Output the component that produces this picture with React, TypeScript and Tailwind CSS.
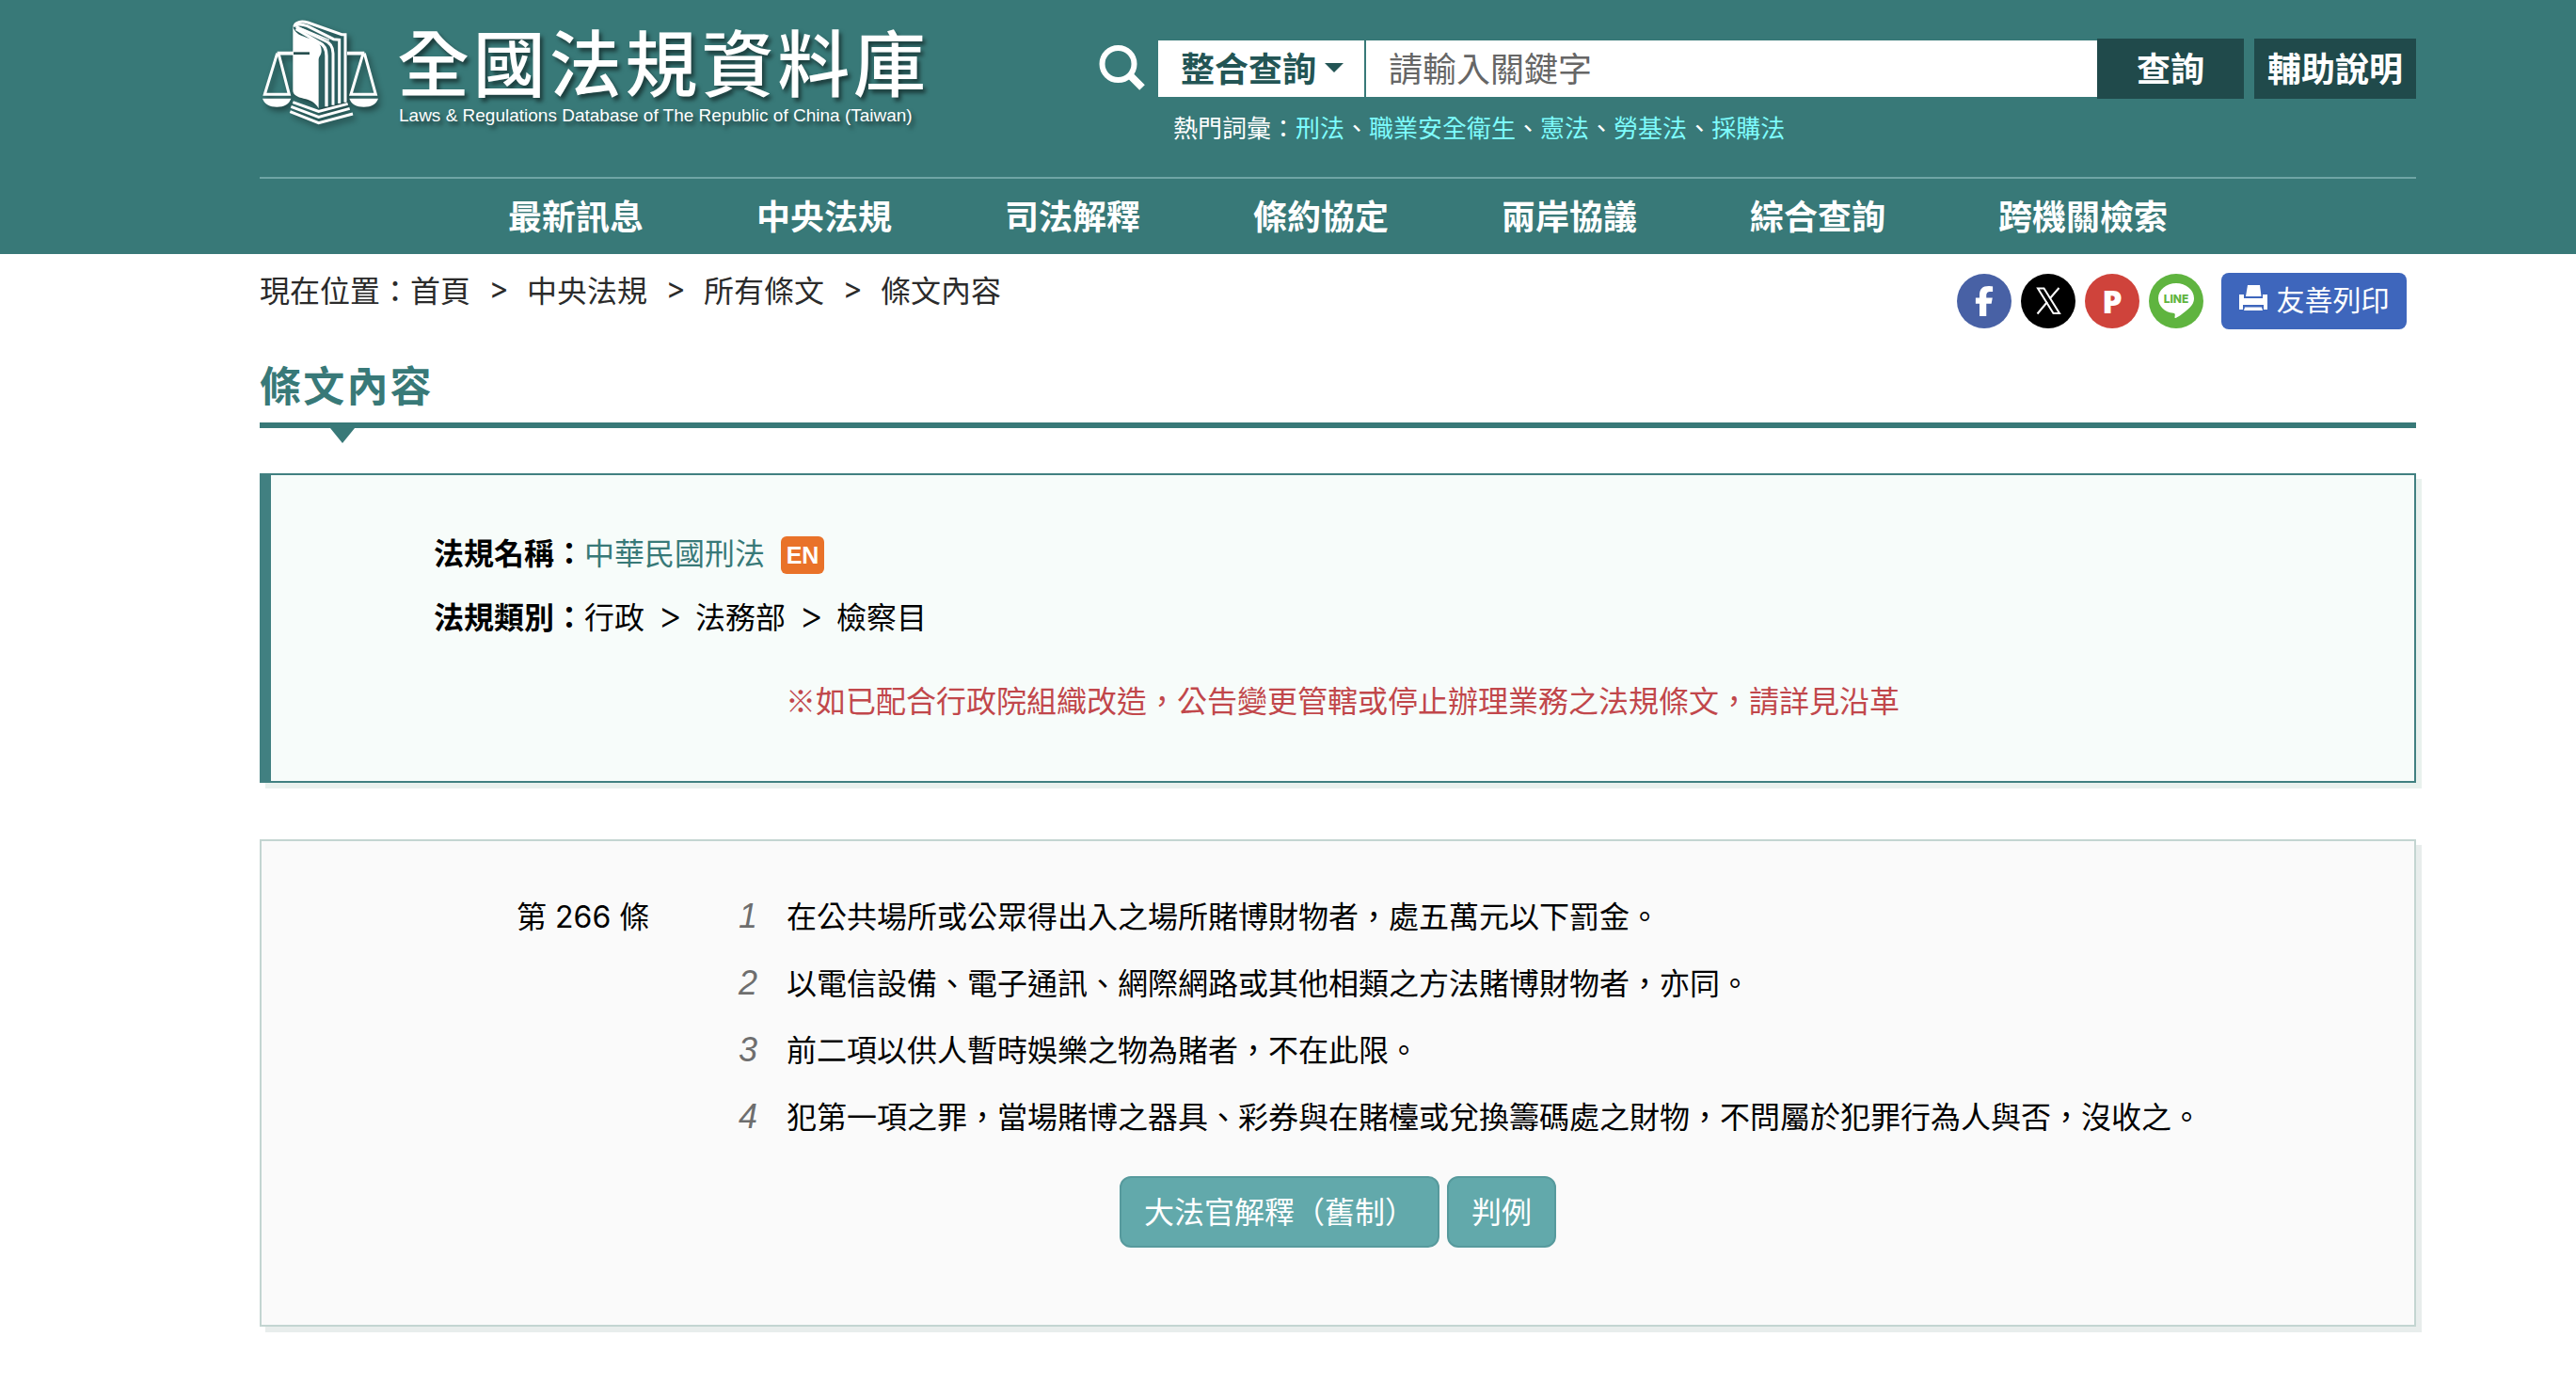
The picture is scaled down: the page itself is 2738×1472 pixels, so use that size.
import React from "react";
import { FaFacebookF } from "react-icons/fa6";

const navItems = ["最新訊息", "中央法規", "司法解釋", "條約協定", "兩岸協議", "綜合查詢", "跨機關檢索"];
const hotWords = ["刑法", "職業安全衛生", "憲法", "勞基法", "採購法"];
const crumbs = ["首頁", "中央法規", "所有條文"];
const paragraphs = [
  "在公共場所或公眾得出入之場所賭博財物者，處五萬元以下罰金。",
  "以電信設備、電子通訊、網際網路或其他相類之方法賭博財物者，亦同。",
  "前二項以供人暫時娛樂之物為賭者，不在此限。",
  "犯第一項之罪，當場賭博之器具、彩券與在賭檯或兌換籌碼處之財物，不問屬於犯罪行為人與否，沒收之。",
];

function ScalesLogo() {
  return (
    <svg viewBox="18 21 390 366" className="h-[122px] w-[130px] shrink-0 overflow-visible drop-shadow-[3px_4px_3px_rgba(0,0,0,0.45)]" aria-hidden="true">
      <g fill="none" stroke="#fff" strokeWidth="9">
        <path d="M128 140H74M290 140H352" strokeWidth="11" />
        <path d="M74 140L34 271H112L78 140" />
        <path d="M348 140L309 271H388L352 140" />
      </g>
      <path d="M27 284H118C112 302 96 311 73 311S33 302 27 284Z" fill="#fff" />
      <path d="M304 284H396C390 302 374 311 350 311S310 302 304 284Z" fill="#fff" />
      <path d="M124 60V52C126 38 148 30 172 38L284 76H297V293L205 316V130Z" fill="#2b5f60" />
      <g fill="none" stroke="#fff" strokeWidth="9">
        <path d="M128 56C130 40 150 36 172 42L280 80H291V296" />
        <path d="M132 54C140 44 156 48 170 53L254 95L272 97V300" />
        <path d="M134 56L222 98C244 106 252 120 252 140V305" />
        <path d="M134 62L208 106C226 114 231 128 231 148V310" strokeWidth="10" />
        <path d="M140 56L240 98" strokeWidth="4" />
      </g>
      <path d="M124 54C130 78 150 84 178 93C204 101 215 112 215 132C215 146 207 148 206 160V316C196 296 178 288 158 284C138 280 124 272 124 258Z" fill="#fff" />
      <path d="M126 140H177" stroke="#274f4f" strokeWidth="8" />
      <g fill="none" stroke="#fff" strokeWidth="9">
        <path d="M124 296L206 325L299 301" />
        <path d="M118 310L206 343L305 316" />
        <path d="M115 326L206 362L315 333" />
      </g>
    </svg>
  );
}

function XIcon() {
  return (
    <svg viewBox="0 0 58 58" className="size-[58px]" aria-hidden="true">
      <g fill="none" stroke="#fff" strokeWidth="2">
        <path d="M18 15.5H24.500L41 42H34.500Z" />
        <path d="M40.500 15L31 26M28 30L17.500 42.500" />
      </g>
    </svg>
  );
}

function LineIcon() {
  return (
    <svg viewBox="0 0 58 58" className="size-[58px]" aria-hidden="true">
      <path d="M29 10C39.500 10 48 17 48 26C48 31.500 45 35 40 39C36 42.500 31 46 28.500 47C27 47.500 27.500 46 27.700 44.500C28 42.500 27.500 42 26 41.800C17 41 10 34.500 10 26C10 17 18.500 10 29 10Z" fill="#fff" />
      <text x="29" y="31" textAnchor="middle" fill="#5fb43f" fontFamily="Inter" fontWeight="800" fontSize="12">LINE</text>
    </svg>
  );
}

function PrinterIcon() {
  return (
    <svg viewBox="0 0 30 28" className="h-[28px] w-[30px]" aria-hidden="true">
      <path d="M9 0H22L23.500 12H7Z" fill="#fff" />
      <path d="M0 10H5V14H25V10H30V26H26V21H4V26H0Z" fill="#fff" />
      <path d="M6 23.500H24L25 27H5Z" fill="#fff" />
    </svg>
  );
}

function Gt({ className }: { className: string }) {
  return <span className={"text-center font-['Inter',sans-serif] " + className}>&gt;</span>;
}

export default function App() {
  return (
    <div lang="zh-Hant" className="min-h-screen bg-white font-['Noto_Sans_CJK_TC',sans-serif] text-[32px] text-black">
      <header className="bg-[#387978] pr-[170px] pl-[276px] text-white">
        <div className="flex h-[188px] items-start">
          <a href="#" className="flex w-[892px] shrink-0 gap-[16px] pt-[17px]">
            <ScalesLogo />
            <span className="flex flex-col whitespace-nowrap [text-shadow:3px_4px_4px_rgba(0,0,0,0.5)]">
              <span className="text-[77px] leading-[94px] font-medium tracking-wider">全國法規資料庫</span>
              <span className="pl-[2px] font-['Liberation_Sans',sans-serif] text-[19px] leading-[24px]">
                Laws &amp; Regulations Database of The Republic of China (Taiwan)
              </span>
            </span>
          </a>
          <div className="min-w-0 flex-1 pt-[41px]">
            <form className="flex items-center" onSubmit={(e) => e.preventDefault()}>
              <svg viewBox="0 0 50 50" className="mr-[13px] size-[50px] shrink-0" aria-hidden="true">
                <circle cx="20.500" cy="20" r="17" fill="none" stroke="#fff" strokeWidth="6" />
                <path d="M32 31L46 45" stroke="#fff" strokeWidth="8" />
              </svg>
              <div className="relative mr-[2px] h-[60px] w-[219px] shrink-0 bg-white">
                <select aria-label="查詢類別" className="size-full appearance-none bg-transparent pb-[4px] pl-[24px] text-[36px] font-bold text-[#235555]">
                  <option>整合查詢</option>
                </select>
                <svg viewBox="0 0 20 10" className="pointer-events-none absolute top-[24px] right-[22px] h-[10px] w-[20px]" aria-hidden="true">
                  <path d="M0 0H20L10 10Z" fill="#235555" />
                </svg>
              </div>
              <input
                type="text"
                aria-label="關鍵字"
                placeholder="請輸入關鍵字"
                className="h-[60px] min-w-0 flex-1 bg-white px-[24px] pb-[4px] text-[36px] text-black outline-none placeholder:text-[#666]"
              />
              <button type="submit" className="h-[64px] w-[156px] shrink-0 bg-[#204a4b] pb-[4px] text-[36px] leading-[60px] font-bold">查詢</button>
              <button type="button" className="ml-[11px] h-[64px] w-[172px] shrink-0 bg-[#204a4b] pb-[4px] text-[36px] leading-[60px] font-bold">輔助說明</button>
            </form>
            <p className="mt-[10px] pl-[79px] text-[26px] leading-[40px]">
              熱門詞彙：
              {hotWords.map((w, i) => (
                <React.Fragment key={w}>
                  {i > 0 && "、"}
                  <a href="#" className="text-[#7efcfd]">{w}</a>
                </React.Fragment>
              ))}
            </p>
          </div>
        </div>
        <nav className="flex h-[82px] items-center justify-center gap-[120px] border-t-2 border-[#6fa5a5] pb-[4px] text-[36px] font-bold">
          {navItems.map((n) => (
            <a key={n} href="#">{n}</a>
          ))}
        </nav>
      </header>

      <main className="pr-[170px] pl-[276px]">
        <div className="flex items-start justify-between pt-[17px] pr-[10px]">
          <nav aria-label="現在位置" className="flex leading-[40px] text-[#2b2b2b]">
            <span>現在位置：</span>
            {crumbs.map((c) => (
              <React.Fragment key={c}>
                <a href="#">{c}</a>
                <Gt className="w-[60px]" />
              </React.Fragment>
            ))}
            <span>條文內容</span>
          </nav>
          <div className="flex items-center pt-[3px]">
            <div className="flex gap-[10px]">
              <a href="#" aria-label="Facebook" className="flex size-[58px] items-center justify-center rounded-full bg-[#4861a5] text-white">
                <FaFacebookF className="size-[32px]" />
              </a>
              <a href="#" aria-label="X" className="size-[58px] rounded-full bg-black"><XIcon /></a>
              <a href="#" aria-label="Plurk" className="size-[58px] rounded-full bg-[#cf433b] text-center font-['Open_Sans',sans-serif] text-[34px] leading-[58px] font-extrabold text-white">P</a>
              <a href="#" aria-label="LINE" className="size-[58px] rounded-full bg-[#5fb43f]"><LineIcon /></a>
            </div>
            <button type="button" className="ml-[19px] flex h-[60px] w-[197px] items-center justify-center gap-[10px] rounded-lg bg-[#3e66bc] pb-[6px] text-[30px] text-white">
              <PrinterIcon />
              友善列印
            </button>
          </div>
        </div>

        <h1 className="relative mt-[28px] border-b-6 border-[#387978] pb-[11px] text-[44px] leading-[60px] font-bold tracking-wider text-[#387978]">
          條文內容
          <svg viewBox="0 0 26 16" className="absolute top-[77px] left-[75px] h-[16px] w-[26px]" aria-hidden="true">
            <path d="M0 0H26L13 16Z" fill="#387978" />
          </svg>
        </h1>

        <section className="mt-[48px] border-2 border-l-12 border-[#418081] bg-[#f7fcfa] pt-[47px] pb-[53px] leading-[68px] shadow-[6px_6px_0_#e9f1ee]">
          <dl className="pl-[173px]">
            <div className="flex">
              <dt className="font-bold">法規名稱：</dt>
              <dd className="flex items-center">
                <a href="#" className="text-[#387978]">中華民國刑法</a>
                <a href="#" className="mt-[8px] ml-[17px] flex h-[40px] w-[46px] items-center justify-center rounded-md bg-[#e97229] font-['Liberation_Sans',sans-serif] text-[25px] font-bold text-white">EN</a>
              </dd>
            </div>
            <div className="flex">
              <dt className="font-bold">法規類別：</dt>
              <dd className="flex">
                行政<Gt className="w-[54px] text-[40px] font-light" />法務部<Gt className="w-[54px] text-[40px] font-light" />檢察目
              </dd>
            </div>
          </dl>
          <p className="mt-[21px] text-center text-[#c1474b]">※如已配合行政院組織改造，公告變更管轄或停止辦理業務之法規條文，請詳見沿革</p>
        </section>

        <section className="mt-[60px] border-2 border-[#c3d5d1] bg-[#fafafa] pt-[43px] pb-[82px] leading-[71px] shadow-[6px_6px_0_#e8edec]">
          <div className="flex pl-[271px]">
            <h2 className="w-[188px] shrink-0 whitespace-nowrap">
              第<span className="font-['Inter',sans-serif]"> 266 </span>條
            </h2>
            <ol>
              {paragraphs.map((p, i) => (
                <li key={p} className="flex items-baseline">
                  <span className="w-[68px] shrink-0 text-right font-['Liberation_Sans',sans-serif] text-[36px] leading-[36px] text-[#6e6e6e] italic">{i + 1}</span>
                  <span className="pl-[31px]">{p}</span>
                </li>
              ))}
            </ol>
          </div>
          <div className="mt-[29px] flex justify-center gap-[8px]">
            <button type="button" className="h-[76px] rounded-xl border-2 border-[#579a9d] bg-[#62a9ab] px-[24px] pb-[4px] leading-[68px] text-white">大法官解釋（舊制）</button>
            <button type="button" className="h-[76px] rounded-xl border-2 border-[#579a9d] bg-[#62a9ab] px-[24px] pb-[4px] leading-[68px] text-white">判例</button>
          </div>
        </section>
      </main>
    </div>
  );
}
